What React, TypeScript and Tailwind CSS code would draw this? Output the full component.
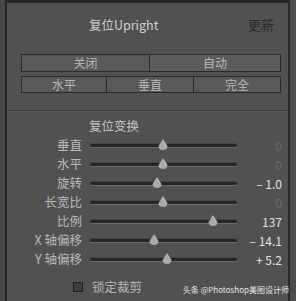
import React from "react";

const FONT = { fontFamily: '"Noto Sans CJK SC", "Noto Sans", sans-serif' };

const SLIDERS = [
  { label: "垂直", value: "0", pos: 73, zero: true },
  { label: "水平", value: "0", pos: 73, zero: true },
  { label: "旋转", value: "– 1.0", pos: 67, zero: false },
  { label: "长宽比", value: "0", pos: 73, zero: true },
  { label: "比例", value: "137", pos: 123, zero: false },
  { label: "X 轴偏移", value: "– 14.1", pos: 64, zero: false },
  { label: "Y 轴偏移", value: "+ 5.2", pos: 77, zero: false },
];

function Thumb({ left }: { left: number }) {
  return (
    <svg
      className="absolute top-[-5px]"
      style={{ left: left - 5 }}
      width="10"
      height="11"
      viewBox="0 0 10 11"
    >
      <path d="M5 0 L9.5 7 Q9.5 11 5 11 Q0.5 11 0.5 7 Z" fill="#a9a9a9" />
      <path d="M5 1.5 L8.5 7" stroke="#c4c4c4" strokeWidth="0.8" fill="none" />
    </svg>
  );
}

export default function App() {
  return (
    <div className="w-[296px] h-[301px] flex bg-[#464646] overflow-hidden" style={FONT}>
      <div className="w-[5px] bg-[#474747]" />
      <div className="flex-1 flex flex-col bg-[#515151] border-l-2 border-t-[3px] border-r-2 border-[#272727]">
        {/* 标题 */}
        <div className="flex items-center h-[20px] mt-[12px] text-[12.5px]">
          <span className="ml-[82px] text-[#cfcfcf]">复位Upright</span>
          <span className="ml-auto mr-[14px] text-[13px] text-[#2a2a2a]">更新</span>
        </div>

        {/* 按钮 */}
        <div className="flex flex-col gap-[4px] mt-[19px] ml-[14px] mr-[7px] text-[12px] text-[#b8b8b8]">
          <div className="flex h-[18px] border border-[#2a2a2a] bg-[#2a2a2a] gap-px">
            <div className="w-[127px] flex items-center justify-center bg-[#595959]">关闭</div>
            <div className="flex-1 flex items-center justify-center bg-[#5c5c5c]">自动</div>
          </div>
          <div className="flex h-[17px] border border-[#2a2a2a] bg-[#2a2a2a] gap-px">
            <div className="w-[84px] flex items-center justify-center bg-[#595959]">水平</div>
            <div className="w-[86px] flex items-center justify-center bg-[#595959]">垂直</div>
            <div className="flex-1 flex items-center justify-center bg-[#595959]">完全</div>
          </div>
        </div>

        {/* 分隔线 */}
        <div className="mt-[17px] h-px bg-[#3c3c3c] shadow-[0_1px_0_#5a5a5a]" />

        <div className="h-[18px] mt-[6px] flex items-center ml-[82px] text-[12.5px] text-[#c4c4c4]">
          复位变换
        </div>

        {/* 滑块 */}
        <div className="flex flex-col mt-[1px]">
          {SLIDERS.map((s) => (
            <div key={s.label} className="flex items-center h-[19px]">
              <div className="w-[75px] text-right text-[12.5px] text-[#b9b9b9]">{s.label}</div>
              <div className="relative ml-[8px] w-[147px] h-[3px] rounded-full bg-[#262626] shadow-[0_1px_0_#6a6a6a,0_-1px_0_#454545]">
                <Thumb left={s.pos} />
              </div>
              <div
                className={
                  s.zero
                    ? "ml-auto mr-[6px] text-[12px] text-[#6d6d6d]"
                    : "ml-auto mr-[6px] text-[12px] text-[#e2e2e2]"
                }
              >
                {s.value}
              </div>
            </div>
          ))}
        </div>

        {/* 锁定裁剪 */}
        <div className="flex items-center mt-[9px] relative">
          <div className="ml-[66px] w-[10px] h-[10px] border border-[#1e1e1e] bg-[#3e3e3e]" />
          <span className="ml-[9px] text-[12.5px] text-[#b6b6b6]">锁定裁剪</span>
          <span className="absolute right-[-1px] top-[6px] text-[8px] text-[#e8e8e8]">
            头条 @Photoshop美图设计师
          </span>
        </div>
      </div>
      <div className="w-[6px] bg-[#4c4c4c]" />
    </div>
  );
}
